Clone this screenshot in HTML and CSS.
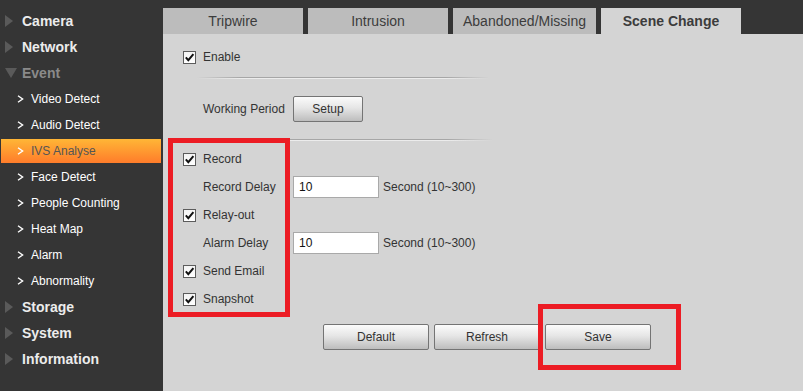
FILE: index.html
```html
<!DOCTYPE html>
<html lang="en">
<head>
  <meta charset="UTF-8"/>
  <title>IVS Analyse - Scene Change</title>
  <link rel="stylesheet" href="styles.css">
</head>
<body>
<div class="page">

  <aside class="menu">
    <div class="menu-item top"><span class="tri"></span>Camera</div>
    <div class="menu-item top"><span class="tri"></span>Network</div>
    <div class="menu-item top open"><span class="tri down"></span>Event</div>
    <div class="menu-item sub"><svg class="chev" viewBox="0 0 7 8"><polyline points="1,0.8 5.6,4 1,7.2"/></svg>Video Detect</div>
    <div class="menu-item sub"><svg class="chev" viewBox="0 0 7 8"><polyline points="1,0.8 5.6,4 1,7.2"/></svg>Audio Detect</div>
    <div class="menu-item sub active"><svg class="chev" viewBox="0 0 7 8"><polyline points="1,0.8 5.6,4 1,7.2"/></svg>IVS Analyse</div>
    <div class="menu-item sub"><svg class="chev" viewBox="0 0 7 8"><polyline points="1,0.8 5.6,4 1,7.2"/></svg>Face Detect</div>
    <div class="menu-item sub"><svg class="chev" viewBox="0 0 7 8"><polyline points="1,0.8 5.6,4 1,7.2"/></svg>People Counting</div>
    <div class="menu-item sub"><svg class="chev" viewBox="0 0 7 8"><polyline points="1,0.8 5.6,4 1,7.2"/></svg>Heat Map</div>
    <div class="menu-item sub"><svg class="chev" viewBox="0 0 7 8"><polyline points="1,0.8 5.6,4 1,7.2"/></svg>Alarm</div>
    <div class="menu-item sub"><svg class="chev" viewBox="0 0 7 8"><polyline points="1,0.8 5.6,4 1,7.2"/></svg>Abnormality</div>
    <div class="menu-item top"><span class="tri"></span>Storage</div>
    <div class="menu-item top"><span class="tri"></span>System</div>
    <div class="menu-item top"><span class="tri"></span>Information</div>
  </aside>

  <main class="main">
    <div class="tabs">
      <div class="tab">Tripwire</div>
      <div class="tab">Intrusion</div>
      <div class="tab wide">Abandoned/Missing</div>
      <div class="tab active">Scene Change</div>
    </div>

    <div class="panel">
      <div class="row">
        <span class="cb-slot"><span class="cb"><svg viewBox="0 0 11 11"><path d="M1.8 5.4 L4.3 8.2 L9.4 2.2"/></svg></span></span>
        <span>Enable</span>
      </div>

      <div class="sep first"></div>

      <div class="row tall">
        <span class="cb-slot"></span>
        <span class="label">Working Period</span>
        <button class="btn setup">Setup</button>
      </div>

      <div class="sep second"></div>

      <div class="list">
        <div class="row">
          <span class="cb-slot"><span class="cb"><svg viewBox="0 0 11 11"><path d="M1.8 5.4 L4.3 8.2 L9.4 2.2"/></svg></span></span>
          <span>Record</span>
        </div>
        <div class="row">
          <span class="cb-slot"></span>
          <span class="label">Record Delay</span>
          <input class="field" type="text" value="10">
          <span class="unit">Second (10~300)</span>
        </div>
        <div class="row">
          <span class="cb-slot"><span class="cb"><svg viewBox="0 0 11 11"><path d="M1.8 5.4 L4.3 8.2 L9.4 2.2"/></svg></span></span>
          <span>Relay-out</span>
        </div>
        <div class="row">
          <span class="cb-slot"></span>
          <span class="label">Alarm Delay</span>
          <input class="field" type="text" value="10">
          <span class="unit">Second (10~300)</span>
        </div>
        <div class="row">
          <span class="cb-slot"><span class="cb"><svg viewBox="0 0 11 11"><path d="M1.8 5.4 L4.3 8.2 L9.4 2.2"/></svg></span></span>
          <span>Send Email</span>
        </div>
        <div class="row">
          <span class="cb-slot"><span class="cb"><svg viewBox="0 0 11 11"><path d="M1.8 5.4 L4.3 8.2 L9.4 2.2"/></svg></span></span>
          <span>Snapshot</span>
        </div>
      </div>

      <div class="actions">
        <button class="btn big">Default</button>
        <button class="btn big">Refresh</button>
        <button class="btn big">Save</button>
      </div>
    </div>
  </main>

  <!-- red annotation boxes -->
  <div class="mark mark-list"></div>
  <div class="mark mark-save"></div>
</div>
</body>
</html>
```

FILE: styles.css
```css
* {
  margin: 0; padding: 0;
  box-sizing: border-box;
}

body {
  font-family: "Liberation Sans", Arial, sans-serif;
  background: #353535;
  overflow: hidden;
}

.page {
  position: relative;
  display: flex;
  width: 803px;
  height: 391px;
}

/* left menu */
.menu {
  width: 163px;
  background: #353535;
  padding-top: 8px;
}

.menu-item {
  display: flex;
  align-items: center;
  height: 26px;
  white-space: nowrap;
}

.menu-item.top {
  padding-left: 5px;
  color: #ececec;
  font-size: 14px;
  font-weight: bold;
}

.menu-item.open {
  color: #8a8a8a;
}

.tri {
  width: 0;
  height: 0;
  border-left: 8px solid #5a5a5a;
  border-top: 6px solid transparent;
  border-bottom: 6px solid transparent;
  margin-right: 9px;
}

.tri.down {
  border-left: 6px solid transparent;
  border-right: 6px solid transparent;
  border-top: 10px solid #5a5a5a;
  border-bottom: 0;
  margin-right: 5px;
}

.menu-item.sub {
  padding-left: 17px;
  color: #ffffff;
  font-size: 12px;
}

.chev {
  width: 7px;
  height: 8px;
  margin-right: 7px;
  fill: none;
  stroke: #ffffff;
  stroke-width: 1.4;
}

.menu-item.active {
  height: 24px;
  margin: 1px 2px 1px 1px;
  padding-left: 16px;
  background: linear-gradient(to bottom, #ffb636, #ff7c2a);
  color: #555;
}

/* main area */
.main {
  flex: 1;
  display: flex;
  flex-direction: column;
}

.tabs {
  display: flex;
  gap: 5px;
  height: 34px;
  padding-top: 8px;
  background: #353535;
}

.tab {
  width: 140px;
  height: 26px;
  line-height: 26px;
  text-align: center;
  font-size: 14px;
  color: #3c3c3c;
  background: #bcbcbc;
}

.tab.wide {
  width: 143px;
}

.tab.active {
  background: #d4d4d4;
  font-weight: bold;
}

.panel {
  flex: 1;
  background: #d4d4d4;
  padding: 13px 0 0 20px;
  font-size: 12px;
  color: #333;
}

.row {
  display: flex;
  align-items: center;
  height: 20px;
}

.row.tall {
  height: 26px;
  margin-top: 17px;
}

.list {
  margin-top: 4px;
}

.list .row {
  height: 28px;
}

.cb-slot {
  width: 20px;
  flex-shrink: 0;
}

.cb {
  display: block;
  width: 13px;
  height: 13px;
  border: 1px solid #5c5c5c;
  background: linear-gradient(to bottom, #f4f4f4, #ffffff);
}

.cb svg {
  display: block;
  width: 11px;
  height: 11px;
  fill: none;
  stroke: #111;
  stroke-width: 2;
}

.label {
  width: 90px;
  flex-shrink: 0;
}

.sep {
  height: 2px;
  margin-left: 14px;
  width: 292px;
  background:
    linear-gradient(to right, rgba(212,212,212,1), rgba(212,212,212,0) 15%, rgba(212,212,212,0) 85%, rgba(212,212,212,1)),
    linear-gradient(to bottom, #a6a6a6 50%, #ececec 50%);
}

.sep.first {
  margin-top: 10px;
}

.sep.second {
  margin-top: 17px;
  margin-left: 0;
  width: 310px;
}

.field {
  width: 86px;
  height: 22px;
  border: 1px solid #a9a9a9;
  background: #fff;
  padding-left: 5px;
  font-family: "Liberation Sans", Arial, sans-serif;
  font-size: 12px;
  color: #111;
  outline: none;
}

.unit {
  margin-left: 4px;
}

.btn {
  font-family: "Liberation Sans", Arial, sans-serif;
  font-size: 12px;
  color: #333;
  border: 1px solid #747474;
  border-radius: 2px;
  background: linear-gradient(to bottom, #fbfbfb, #e6e6e6 45%, #bdbdbd);
  height: 26px;
  cursor: pointer;
}

.btn.setup {
  width: 70px;
}

.actions {
  display: flex;
  gap: 5px;
  margin-top: 11px;
  padding-left: 140px;
}

.btn.big {
  width: 106px;
}

/* annotations drawn on top of the screenshot */
.mark {
  position: absolute;
  border: 5px solid #ec1c24;
}

.mark-list {
  left: 168px;
  top: 138px;
  width: 122px;
  height: 179px;
}

.mark-save {
  left: 538px;
  top: 304px;
  width: 143px;
  height: 66px;
}
```
